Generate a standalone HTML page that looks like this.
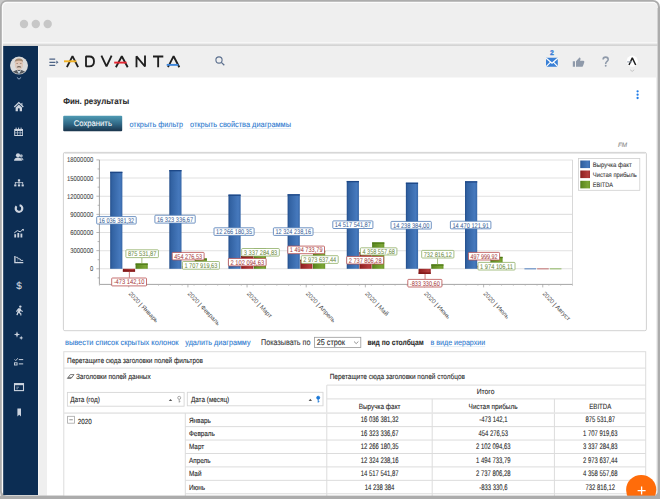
<!DOCTYPE html>
<html><head><meta charset="utf-8"><style>
*{margin:0;padding:0}
html,body{width:660px;height:499px;overflow:hidden;background:#fff}
svg{display:block;font-family:"Liberation Sans",sans-serif}
text{stroke:currentColor;text-rendering:geometricPrecision}
</style></head><body>
<svg width="660" height="499" viewBox="0 0 660 499">
<defs>
<linearGradient id="tbl" x1="0" y1="0" x2="0" y2="1"><stop offset="0" stop-color="#e2e2e2"/><stop offset="1" stop-color="#d0d0d0"/></linearGradient>
<linearGradient id="btn" x1="0" y1="0" x2="0" y2="1"><stop offset="0" stop-color="#4f9bb4"/><stop offset="0.55" stop-color="#2f6684"/><stop offset="1" stop-color="#1a344c"/></linearGradient>
<linearGradient id="gb" x1="0" y1="0" x2="1" y2="0"><stop offset="0" stop-color="#214c8a"/><stop offset="0.15" stop-color="#3262a2"/><stop offset="0.8" stop-color="#4679bd"/><stop offset="1" stop-color="#3767a8"/></linearGradient>
<linearGradient id="gr" x1="0" y1="0" x2="1" y2="0"><stop offset="0" stop-color="#7e1616"/><stop offset="0.15" stop-color="#952424"/><stop offset="0.8" stop-color="#b33c3c"/><stop offset="1" stop-color="#9c2e2e"/></linearGradient>
<linearGradient id="gg" x1="0" y1="0" x2="1" y2="0"><stop offset="0" stop-color="#4b7616"/><stop offset="0.15" stop-color="#5e8a20"/><stop offset="0.8" stop-color="#7ba536"/><stop offset="1" stop-color="#6a9528"/></linearGradient>
</defs><rect x="0" y="0" width="660" height="499" fill="#fff"/>
<rect x="0" y="0" width="10" height="10" fill="#c8c8c8"/>
<rect x="0" y="0" width="660" height="499" rx="7" fill="#acacac"/>
<rect x="1.8" y="1.8" width="656" height="494" rx="5" fill="#fbfbfb"/>
<rect x="3" y="3" width="654.5" height="492.5" rx="4.5" fill="#efefef"/>
<circle cx="24" cy="24" r="4.2" fill="#c7c7c7"/>
<circle cx="35.8" cy="24" r="4.2" fill="#c7c7c7"/>
<circle cx="47.7" cy="24" r="4.2" fill="#c7c7c7"/>
<rect x="3" y="42" width="654.5" height="1.5" fill="#f7f7f7"/>
<rect x="3" y="43.6" width="654.5" height="2.4" fill="url(#tbl)"/>
<rect x="3.2" y="46" width="34.8" height="449" fill="#0c2d53"/>
<rect x="38" y="46" width="1" height="449" fill="#f6f6f6"/>
<rect x="47" y="77.5" width="609" height="418" fill="#ffffff"/>
<g stroke="#4d6385" stroke-width="1.2" fill="none"><path d="M49.4 59.2H55.2M49.4 62.3H55.4M49.4 65.4H55.2"/></g><path d="M56.3 60.5L58.5 62.3L56.3 64.1Z" fill="#4d6385"/>
<g fill="none" stroke="#1f1f1f" stroke-width="1.85" stroke-linejoin="bevel"><path d="M66.9 67.2L72.5 56.2L78.1 67.2"/><path d="M86 56.5V66.3H89.3C92.9 66.3 94 63.7 94 61.4C94 59.1 92.9 56.5 89.3 56.5Z"/><path d="M101.4 55.6L106.5 66.4L111.6 55.6"/><path d="M115.9 67.2L121.8 56.2L127.7 67.2"/><path d="M136.5 67.2V56.3L145 66.5V55.6"/><path d="M153 56.5H163.3M158.15 56.5V67.2"/><path d="M168 67.2L173.6 56.2L179.3 67.2"/></g>
<line x1="64" y1="61.3" x2="76.3" y2="61.3" stroke="#f1b124" stroke-width="1.9"/>
<line x1="114.2" y1="62.6" x2="126.6" y2="62.6" stroke="#e52631" stroke-width="1.9"/>
<line x1="166.7" y1="64.9" x2="178.4" y2="64.9" stroke="#3b84d9" stroke-width="1.9"/>
<g fill="none" stroke="#5b6f8e" stroke-width="1.1"><circle cx="219" cy="60" r="3.1"/><path d="M221.3 62.4L224.3 65.3" stroke-width="1.3"/></g>
<rect x="546" y="57.8" width="11.8" height="9" rx="0.3" fill="#3a80d6"/>
<path d="M546.2 58.2L552 63.2L557.8 58.2M546.2 66.6L550.3 62.3M557.8 66.6L553.7 62.3" stroke="#fff" stroke-width="1.15" fill="none"/>
<text x="552.00" y="54.95" font-size="6.8" fill="#3a80d6" color="#3a80d6" stroke-width="0.35" text-anchor="middle" font-weight="bold">2</text>
<path fill="#8f9aaa" d="M572.8 61.2h2.2v5.5h-2.2z M576 61.3L578.6 58.6L579.3 57.4C580.2 57.3 580.8 58.1 580.5 59.3L580 60.8H583.3C584.2 60.8 584.5 61.6 584.2 62.4L583 65.9C582.7 66.5 582.3 66.7 581.7 66.7H576Z"/>
<path d="M603.1 59.6C603.1 57.9 604.2 57.1 605.6 57.1C607.1 57.1 608.2 58 608.2 59.4C608.2 61.3 605.7 61.5 605.7 63.6V64" stroke="#8f9aaa" stroke-width="1.55" fill="none"/><circle cx="605.7" cy="65.7" r="0.95" fill="#8f9aaa"/>
<circle cx="632.2" cy="61.2" r="5.6" fill="#ffffff"/>
<path d="M629 65L632.3 57.9L635.7 65" stroke="#1e1e1e" stroke-width="1.45" stroke-linejoin="bevel" fill="none"/>
<line x1="627.2" y1="61.9" x2="632.2" y2="61.9" stroke="#8a96a6" stroke-width="1.0"/>
<path d="M630.2 69.8L632.2 71.4L634.2 69.8" stroke="#b0b0b0" stroke-width="0.7" fill="none"/>
<circle cx="19" cy="65.6" r="9" fill="#c9c9c9"/>
<clipPath id="avc"><circle cx="19" cy="65.6" r="8.5"/></clipPath>
<g clip-path="url(#avc)"><rect x="10" y="56" width="18" height="19" fill="#dcdcdc"/><path d="M12 76L13.2 71.6L16.5 70L19 69.6L21.5 70L24.8 71.6L26 76Z" fill="#55595f"/><path d="M16.6 70L19 73.8L21.4 70L19 71.2Z" fill="#f4f4f4"/><path d="M18.6 71.2H19.4L19.5 74H18.5Z" fill="#8fb3d0"/><ellipse cx="18.9" cy="64.8" rx="4.1" ry="5.1" fill="#e3c5b3"/><ellipse cx="18.9" cy="66.2" rx="3.4" ry="3.2" fill="#d8d0ca" opacity="0.6"/><path d="M14.8 63C14.6 59.2 16.4 58.4 19 58.4C21.6 58.4 23.4 59.4 23.1 63L22.4 61.3C21 60.4 17 60.4 15.5 61.3Z" fill="#a58a72"/><path d="M16.6 66.9C17.6 66.1 20.4 66.1 21.3 66.9L20.8 67.6C20 67.2 17.9 67.2 17.1 67.6Z" fill="#4e3f35"/><rect x="16.4" y="63.4" width="1.6" height="0.6" fill="#8a7060"/><rect x="19.9" y="63.4" width="1.6" height="0.6" fill="#8a7060"/></g>
<path d="M16.9 77.4L19 79.2L21.1 77.4" stroke="#a9bbd2" stroke-width="0.9" fill="none"/>
<path d="M14.3 107L18.8 102.6L23.3 107" stroke="#cdd4df" stroke-width="1.25" fill="none"/><path d="M21.3 103.2L22.4 102.8V105.6L21.3 104.6Z" fill="#cdd4df"/>
<path fill="#cdd4df" d="M15.6 107.6L18.8 104.6L22 107.6V111.2H19.7V108.6Q18.8 107.8 17.9 108.6V111.2H15.6Z"/>
<g fill="#cdd4df"><path d="M14.2 129h8.8v7h-8.8z"/></g><g fill="#0c2d53"><rect x="15.2" y="131" width="2" height="1.6"/><rect x="17.8" y="131" width="2" height="1.6"/><rect x="20.4" y="131" width="1.8" height="1.6"/><rect x="15.2" y="133.2" width="2" height="1.8"/><rect x="17.8" y="133.2" width="2" height="1.8"/><rect x="20.4" y="133.2" width="1.8" height="1.8"/></g>
<g fill="#cdd4df"><rect x="15.6" y="127.6" width="1" height="1.8"/><rect x="18.1" y="127.6" width="1" height="1.8"/><rect x="20.6" y="127.6" width="1" height="1.8"/></g>
<g fill="#cdd4df"><circle cx="18" cy="155.3" r="2.1"/><path d="M14 160.8C14 158.3 16 157.6 18 157.6C20 157.6 22 158.3 22 160.8Z"/><circle cx="21.2" cy="155.8" r="1.6" opacity="0.8"/><path d="M20.6 157.4C22.4 157.5 23.5 158.4 23.5 160.3H22.3Z" opacity="0.8"/></g>
<g fill="#cdd4df"><rect x="17.9" y="179.3" width="2.2" height="2"/><rect x="18.6" y="181" width="0.8" height="1.6"/><rect x="14.9" y="182.3" width="8.2" height="0.8"/><rect x="14.9" y="182.3" width="0.8" height="2"/><rect x="18.6" y="182.3" width="0.8" height="2"/><rect x="22.3" y="182.3" width="0.8" height="2"/><rect x="14.2" y="184.4" width="2.2" height="2"/><rect x="17.9" y="184.4" width="2.2" height="2"/><rect x="21.6" y="184.4" width="2.2" height="2"/></g>
<circle cx="19" cy="208.5" r="3.3" fill="none" stroke="#cdd4df" stroke-width="2.2" stroke-dasharray="17 3.8" transform="rotate(-80 19 208.5)"/>
<g fill="#cdd4df"><rect x="14.3" y="234.2" width="1.8" height="3.3"/><rect x="17.4" y="233" width="1.8" height="4.5"/><rect x="20.5" y="233.6" width="1.8" height="3.9"/></g><path d="M14.2 233L17.3 230.6L20.2 231.8L23.2 229.4" stroke="#cdd4df" stroke-width="1" fill="none"/><path d="M21.6 229H23.8V231.2Z" fill="#cdd4df"/>
<path d="M14.9 256.1V262.6H23.3" stroke="#cdd4df" stroke-width="1.35" fill="none"/><path d="M15.8 257.3H17.6L18.4 258.9H20.1L20.9 260.4H23.1" stroke="#cdd4df" stroke-width="0.9" fill="none"/><path d="M17.6 257.3V261.8M20.1 258.9V261.8" stroke="#cdd4df" stroke-width="0.5" opacity="0.5"/>
<text x="19.00" y="288.50" font-size="10" fill="#cdd4df" color="#cdd4df" stroke-width="0.1" text-anchor="middle">$</text>
<g fill="#cdd4df"><circle cx="20.3" cy="306.6" r="1.2"/><path d="M18.2 308.3L20.6 308.2L21.4 310.3L23 311.1L22.6 311.9L20.6 311L19.9 312.2L21.4 313.6V315.4H20.3V314.2L18.6 312.8L17.6 315.3L16.3 315.1L17.6 311.6L18.5 310.1L17.6 310.9L16.6 311.9L16 311.3Z"/></g>
<g fill="#cdd4df"><path d="M17 331.3L17.8 333.7L20.2 334.5L17.8 335.3L17 337.7L16.2 335.3L13.8 334.5L16.2 333.7Z"/><path d="M21.2 335.8L21.8 337.3L23.3 337.9L21.8 338.5L21.2 340L20.6 338.5L19.1 337.9L20.6 337.3Z"/></g>
<g stroke="#cdd4df" fill="none"><path d="M14.6 359.4L15.8 360.6L17.8 358.2" stroke-width="0.9"/><rect x="14.5" y="362.8" width="2.6" height="2.2" stroke-width="0.9"/><path d="M18.8 359.6H23.2M18.8 363.9H23.2" stroke-width="1"/></g>
<rect x="14.5" y="383.6" width="9" height="7" fill="none" stroke="#cdd4df" stroke-width="1.1"/><rect x="14.5" y="383.6" width="9" height="1.6" fill="#cdd4df"/><path d="M16.3 387.2H19M16.3 388.8H18" stroke="#cdd4df" stroke-width="0.6"/>
<path d="M17.4 408.6H21V416.6L19.2 414.8L17.4 416.6Z" fill="#cdd4df"/>
<text x="63.20" y="104.40" font-size="8.6" fill="#2b2b2b" color="#2b2b2b" stroke-width="0.1" font-weight="bold" textLength="66.00" lengthAdjust="spacingAndGlyphs">Фин. результаты</text>
<rect x="63.2" y="115.8" width="59" height="15.4" rx="1" fill="url(#btn)"/>
<text x="92.80" y="126.10" font-size="8.2" fill="#f4f7fa" color="#f4f7fa" stroke-width="0.1" text-anchor="middle" textLength="38.20" lengthAdjust="spacingAndGlyphs">Сохранить</text>
<text x="129.50" y="126.90" font-size="8" fill="#2f7bd0" color="#2f7bd0" stroke-width="0.1" textLength="53.50" lengthAdjust="spacingAndGlyphs">открыть фильтр</text>
<line x1="129.5" y1="128.5" x2="183" y2="128.5" stroke="#cfe0f3" stroke-width="0.6"/>
<text x="190.00" y="126.90" font-size="8" fill="#2f7bd0" color="#2f7bd0" stroke-width="0.1" textLength="101.00" lengthAdjust="spacingAndGlyphs">открыть свойства диаграммы</text>
<line x1="190" y1="128.5" x2="291" y2="128.5" stroke="#cfe0f3" stroke-width="0.6"/>
<circle cx="637.6" cy="91.3" r="1.15" fill="#1f7ce8"/>
<circle cx="637.6" cy="94.7" r="1.15" fill="#1f7ce8"/>
<circle cx="637.6" cy="98" r="1.15" fill="#1f7ce8"/>
<text x="617.90" y="146.80" font-size="6.3" fill="#8a8a8a" color="#8a8a8a" stroke-width="0.1" font-style="italic" textLength="9.20" lengthAdjust="spacingAndGlyphs">FM</text>
<rect x="63.4" y="152.4" width="583" height="178.3" rx="1.5" fill="#fff" stroke="#d2d2d2" stroke-width="1"/>
<line x1="64.5" y1="153.2" x2="645.4" y2="153.2" stroke="#dcdcdc" stroke-width="1"/>
<line x1="99.5" y1="268.8" x2="572.5" y2="268.8" stroke="#e1e1e1" stroke-width="1.05"/>
<line x1="99.5" y1="250.65" x2="572.5" y2="250.65" stroke="#e1e1e1" stroke-width="1.05"/>
<line x1="99.5" y1="232.5" x2="572.5" y2="232.5" stroke="#e1e1e1" stroke-width="1.05"/>
<line x1="99.5" y1="214.35000000000002" x2="572.5" y2="214.35000000000002" stroke="#e1e1e1" stroke-width="1.05"/>
<line x1="99.5" y1="196.20000000000002" x2="572.5" y2="196.20000000000002" stroke="#e1e1e1" stroke-width="1.05"/>
<line x1="99.5" y1="178.05" x2="572.5" y2="178.05" stroke="#e1e1e1" stroke-width="1.05"/>
<line x1="99.5" y1="159.90000000000003" x2="572.5" y2="159.90000000000003" stroke="#e1e1e1" stroke-width="1.05"/>
<line x1="572.5" y1="159.9" x2="572.5" y2="284.4" stroke="#d8d8d8" stroke-width="1"/>
<line x1="99.4" y1="159.9" x2="99.4" y2="284.4" stroke="#9a9a9a" stroke-width="0.9"/>
<line x1="99.4" y1="284.4" x2="572.5" y2="284.4" stroke="#9a9a9a" stroke-width="0.9"/>
<line x1="97.60000000000001" y1="277.875" x2="99.4" y2="277.875" stroke="#9a9a9a" stroke-width="0.7"/>
<line x1="96.4" y1="268.8" x2="99.4" y2="268.8" stroke="#9a9a9a" stroke-width="0.7"/>
<line x1="97.60000000000001" y1="259.725" x2="99.4" y2="259.725" stroke="#9a9a9a" stroke-width="0.7"/>
<line x1="96.4" y1="250.65" x2="99.4" y2="250.65" stroke="#9a9a9a" stroke-width="0.7"/>
<line x1="97.60000000000001" y1="241.57500000000002" x2="99.4" y2="241.57500000000002" stroke="#9a9a9a" stroke-width="0.7"/>
<line x1="96.4" y1="232.5" x2="99.4" y2="232.5" stroke="#9a9a9a" stroke-width="0.7"/>
<line x1="97.60000000000001" y1="223.425" x2="99.4" y2="223.425" stroke="#9a9a9a" stroke-width="0.7"/>
<line x1="96.4" y1="214.35000000000002" x2="99.4" y2="214.35000000000002" stroke="#9a9a9a" stroke-width="0.7"/>
<line x1="97.60000000000001" y1="205.27500000000003" x2="99.4" y2="205.27500000000003" stroke="#9a9a9a" stroke-width="0.7"/>
<line x1="96.4" y1="196.20000000000002" x2="99.4" y2="196.20000000000002" stroke="#9a9a9a" stroke-width="0.7"/>
<line x1="97.60000000000001" y1="187.125" x2="99.4" y2="187.125" stroke="#9a9a9a" stroke-width="0.7"/>
<line x1="96.4" y1="178.05" x2="99.4" y2="178.05" stroke="#9a9a9a" stroke-width="0.7"/>
<line x1="97.60000000000001" y1="168.97500000000002" x2="99.4" y2="168.97500000000002" stroke="#9a9a9a" stroke-width="0.7"/>
<line x1="96.4" y1="159.90000000000003" x2="99.4" y2="159.90000000000003" stroke="#9a9a9a" stroke-width="0.7"/>
<text x="93.20" y="271.30" font-size="7" fill="#4a4a4a" color="#4a4a4a" stroke-width="0.1" text-anchor="end" textLength="3.27" lengthAdjust="spacingAndGlyphs">0</text>
<text x="93.20" y="253.15" font-size="7" fill="#4a4a4a" color="#4a4a4a" stroke-width="0.1" text-anchor="end" textLength="22.89" lengthAdjust="spacingAndGlyphs">3000000</text>
<text x="93.20" y="235.00" font-size="7" fill="#4a4a4a" color="#4a4a4a" stroke-width="0.1" text-anchor="end" textLength="22.89" lengthAdjust="spacingAndGlyphs">6000000</text>
<text x="93.20" y="216.85" font-size="7" fill="#4a4a4a" color="#4a4a4a" stroke-width="0.1" text-anchor="end" textLength="22.89" lengthAdjust="spacingAndGlyphs">9000000</text>
<text x="93.20" y="198.70" font-size="7" fill="#4a4a4a" color="#4a4a4a" stroke-width="0.1" text-anchor="end" textLength="26.16" lengthAdjust="spacingAndGlyphs">12000000</text>
<text x="93.20" y="180.55" font-size="7" fill="#4a4a4a" color="#4a4a4a" stroke-width="0.1" text-anchor="end" textLength="26.16" lengthAdjust="spacingAndGlyphs">15000000</text>
<text x="93.20" y="162.40" font-size="7" fill="#4a4a4a" color="#4a4a4a" stroke-width="0.1" text-anchor="end" textLength="26.16" lengthAdjust="spacingAndGlyphs">18000000</text>
<line x1="128.77" y1="284.4" x2="128.77" y2="287.4" stroke="#9a9a9a" stroke-width="0.7"/>
<line x1="187.91000000000003" y1="284.4" x2="187.91000000000003" y2="287.4" stroke="#9a9a9a" stroke-width="0.7"/>
<line x1="247.05" y1="284.4" x2="247.05" y2="287.4" stroke="#9a9a9a" stroke-width="0.7"/>
<line x1="306.19" y1="284.4" x2="306.19" y2="287.4" stroke="#9a9a9a" stroke-width="0.7"/>
<line x1="365.33" y1="284.4" x2="365.33" y2="287.4" stroke="#9a9a9a" stroke-width="0.7"/>
<line x1="424.46999999999997" y1="284.4" x2="424.46999999999997" y2="287.4" stroke="#9a9a9a" stroke-width="0.7"/>
<line x1="483.61" y1="284.4" x2="483.61" y2="287.4" stroke="#9a9a9a" stroke-width="0.7"/>
<line x1="542.75" y1="284.4" x2="542.75" y2="287.4" stroke="#9a9a9a" stroke-width="0.7"/>
<line x1="99.4" y1="284.4" x2="99.4" y2="285.9" stroke="#b5b5b5" stroke-width="0.6"/>
<line x1="111.22800000000001" y1="284.4" x2="111.22800000000001" y2="285.9" stroke="#b5b5b5" stroke-width="0.6"/>
<line x1="123.05600000000001" y1="284.4" x2="123.05600000000001" y2="285.9" stroke="#b5b5b5" stroke-width="0.6"/>
<line x1="134.88400000000001" y1="284.4" x2="134.88400000000001" y2="285.9" stroke="#b5b5b5" stroke-width="0.6"/>
<line x1="146.712" y1="284.4" x2="146.712" y2="285.9" stroke="#b5b5b5" stroke-width="0.6"/>
<line x1="158.54000000000002" y1="284.4" x2="158.54000000000002" y2="285.9" stroke="#b5b5b5" stroke-width="0.6"/>
<line x1="170.368" y1="284.4" x2="170.368" y2="285.9" stroke="#b5b5b5" stroke-width="0.6"/>
<line x1="182.19600000000003" y1="284.4" x2="182.19600000000003" y2="285.9" stroke="#b5b5b5" stroke-width="0.6"/>
<line x1="194.024" y1="284.4" x2="194.024" y2="285.9" stroke="#b5b5b5" stroke-width="0.6"/>
<line x1="205.852" y1="284.4" x2="205.852" y2="285.9" stroke="#b5b5b5" stroke-width="0.6"/>
<line x1="217.68" y1="284.4" x2="217.68" y2="285.9" stroke="#b5b5b5" stroke-width="0.6"/>
<line x1="229.508" y1="284.4" x2="229.508" y2="285.9" stroke="#b5b5b5" stroke-width="0.6"/>
<line x1="241.336" y1="284.4" x2="241.336" y2="285.9" stroke="#b5b5b5" stroke-width="0.6"/>
<line x1="253.16400000000002" y1="284.4" x2="253.16400000000002" y2="285.9" stroke="#b5b5b5" stroke-width="0.6"/>
<line x1="264.992" y1="284.4" x2="264.992" y2="285.9" stroke="#b5b5b5" stroke-width="0.6"/>
<line x1="276.82000000000005" y1="284.4" x2="276.82000000000005" y2="285.9" stroke="#b5b5b5" stroke-width="0.6"/>
<line x1="288.648" y1="284.4" x2="288.648" y2="285.9" stroke="#b5b5b5" stroke-width="0.6"/>
<line x1="300.476" y1="284.4" x2="300.476" y2="285.9" stroke="#b5b5b5" stroke-width="0.6"/>
<line x1="312.304" y1="284.4" x2="312.304" y2="285.9" stroke="#b5b5b5" stroke-width="0.6"/>
<line x1="324.13200000000006" y1="284.4" x2="324.13200000000006" y2="285.9" stroke="#b5b5b5" stroke-width="0.6"/>
<line x1="335.96000000000004" y1="284.4" x2="335.96000000000004" y2="285.9" stroke="#b5b5b5" stroke-width="0.6"/>
<line x1="347.788" y1="284.4" x2="347.788" y2="285.9" stroke="#b5b5b5" stroke-width="0.6"/>
<line x1="359.616" y1="284.4" x2="359.616" y2="285.9" stroke="#b5b5b5" stroke-width="0.6"/>
<line x1="371.44399999999996" y1="284.4" x2="371.44399999999996" y2="285.9" stroke="#b5b5b5" stroke-width="0.6"/>
<line x1="383.27200000000005" y1="284.4" x2="383.27200000000005" y2="285.9" stroke="#b5b5b5" stroke-width="0.6"/>
<line x1="395.1" y1="284.4" x2="395.1" y2="285.9" stroke="#b5b5b5" stroke-width="0.6"/>
<line x1="406.928" y1="284.4" x2="406.928" y2="285.9" stroke="#b5b5b5" stroke-width="0.6"/>
<line x1="418.756" y1="284.4" x2="418.756" y2="285.9" stroke="#b5b5b5" stroke-width="0.6"/>
<line x1="430.58400000000006" y1="284.4" x2="430.58400000000006" y2="285.9" stroke="#b5b5b5" stroke-width="0.6"/>
<line x1="442.41200000000003" y1="284.4" x2="442.41200000000003" y2="285.9" stroke="#b5b5b5" stroke-width="0.6"/>
<line x1="454.24" y1="284.4" x2="454.24" y2="285.9" stroke="#b5b5b5" stroke-width="0.6"/>
<line x1="466.068" y1="284.4" x2="466.068" y2="285.9" stroke="#b5b5b5" stroke-width="0.6"/>
<line x1="477.89599999999996" y1="284.4" x2="477.89599999999996" y2="285.9" stroke="#b5b5b5" stroke-width="0.6"/>
<line x1="489.72400000000005" y1="284.4" x2="489.72400000000005" y2="285.9" stroke="#b5b5b5" stroke-width="0.6"/>
<line x1="501.552" y1="284.4" x2="501.552" y2="285.9" stroke="#b5b5b5" stroke-width="0.6"/>
<line x1="513.38" y1="284.4" x2="513.38" y2="285.9" stroke="#b5b5b5" stroke-width="0.6"/>
<line x1="525.208" y1="284.4" x2="525.208" y2="285.9" stroke="#b5b5b5" stroke-width="0.6"/>
<line x1="537.036" y1="284.4" x2="537.036" y2="285.9" stroke="#b5b5b5" stroke-width="0.6"/>
<line x1="548.864" y1="284.4" x2="548.864" y2="285.9" stroke="#b5b5b5" stroke-width="0.6"/>
<line x1="560.692" y1="284.4" x2="560.692" y2="285.9" stroke="#b5b5b5" stroke-width="0.6"/>
<line x1="572.52" y1="284.4" x2="572.52" y2="285.9" stroke="#b5b5b5" stroke-width="0.6"/>
<rect x="110.17" y="171.78" width="12.2" height="97.02" fill="url(#gb)"/>
<rect x="110.17" y="171.78" width="12.2" height="1.3" fill="#1d4786"/>
<rect x="122.87" y="268.80" width="12.2" height="2.86" fill="url(#gr)"/>
<rect x="122.87" y="270.36" width="12.2" height="1.3" fill="#7d1414"/>
<rect x="135.57" y="263.50" width="12.2" height="5.30" fill="url(#gg)"/>
<rect x="135.57" y="263.50" width="12.2" height="1.3" fill="#4e7a16"/>
<rect x="169.31" y="170.04" width="12.2" height="98.76" fill="url(#gb)"/>
<rect x="169.31" y="170.04" width="12.2" height="1.3" fill="#1d4786"/>
<rect x="182.01" y="266.05" width="12.2" height="2.75" fill="url(#gr)"/>
<rect x="182.01" y="266.05" width="12.2" height="1.3" fill="#7d1414"/>
<rect x="194.71" y="258.47" width="12.2" height="10.33" fill="url(#gg)"/>
<rect x="194.71" y="258.47" width="12.2" height="1.3" fill="#4e7a16"/>
<rect x="228.45" y="194.59" width="12.2" height="74.21" fill="url(#gb)"/>
<rect x="228.45" y="194.59" width="12.2" height="1.3" fill="#1d4786"/>
<rect x="241.15" y="256.08" width="12.2" height="12.72" fill="url(#gr)"/>
<rect x="241.15" y="256.08" width="12.2" height="1.3" fill="#7d1414"/>
<rect x="253.85" y="248.61" width="12.2" height="20.19" fill="url(#gg)"/>
<rect x="253.85" y="248.61" width="12.2" height="1.3" fill="#4e7a16"/>
<rect x="287.59" y="194.24" width="12.2" height="74.56" fill="url(#gb)"/>
<rect x="287.59" y="194.24" width="12.2" height="1.3" fill="#1d4786"/>
<rect x="300.29" y="259.76" width="12.2" height="9.04" fill="url(#gr)"/>
<rect x="300.29" y="259.76" width="12.2" height="1.3" fill="#7d1414"/>
<rect x="312.99" y="250.81" width="12.2" height="17.99" fill="url(#gg)"/>
<rect x="312.99" y="250.81" width="12.2" height="1.3" fill="#4e7a16"/>
<rect x="346.73" y="180.97" width="12.2" height="87.83" fill="url(#gb)"/>
<rect x="346.73" y="180.97" width="12.2" height="1.3" fill="#1d4786"/>
<rect x="359.43" y="252.24" width="12.2" height="16.56" fill="url(#gr)"/>
<rect x="359.43" y="252.24" width="12.2" height="1.3" fill="#7d1414"/>
<rect x="372.13" y="242.43" width="12.2" height="26.37" fill="url(#gg)"/>
<rect x="372.13" y="242.43" width="12.2" height="1.3" fill="#4e7a16"/>
<rect x="405.87" y="182.66" width="12.2" height="86.14" fill="url(#gb)"/>
<rect x="405.87" y="182.66" width="12.2" height="1.3" fill="#1d4786"/>
<rect x="418.57" y="268.80" width="12.2" height="5.04" fill="url(#gr)"/>
<rect x="418.57" y="272.54" width="12.2" height="1.3" fill="#7d1414"/>
<rect x="431.27" y="264.37" width="12.2" height="4.43" fill="url(#gg)"/>
<rect x="431.27" y="264.37" width="12.2" height="1.3" fill="#4e7a16"/>
<rect x="465.01" y="181.26" width="12.2" height="87.54" fill="url(#gb)"/>
<rect x="465.01" y="181.26" width="12.2" height="1.3" fill="#1d4786"/>
<rect x="477.71" y="265.79" width="12.2" height="3.01" fill="url(#gr)"/>
<rect x="477.71" y="265.79" width="12.2" height="1.3" fill="#7d1414"/>
<rect x="490.41" y="256.86" width="12.2" height="11.94" fill="url(#gg)"/>
<rect x="490.41" y="256.86" width="12.2" height="1.3" fill="#4e7a16"/>
<rect x="524.45" y="268.2" width="11.6" height="1.2" fill="#6d93c8"/>
<rect x="537.15" y="268.2" width="11.6" height="1.2" fill="#c98585"/>
<rect x="549.85" y="268.2" width="11.6" height="1.2" fill="#9fc079"/>
<line x1="141.87" y1="263.50303218650004" x2="141.87" y2="258.0" stroke="#8fb060" stroke-width="0.8"/>
<line x1="129.37" y1="271.7" x2="129.37" y2="277.6" stroke="#c05a5a" stroke-width="0.8"/>
<line x1="425.07" y1="273.90000000000003" x2="425.07" y2="279.0" stroke="#c05a5a" stroke-width="0.8"/>
<line x1="437.57" y1="264.366462474" x2="437.57" y2="258.4" stroke="#8fb060" stroke-width="0.8"/>
<rect x="96.70" y="216.60" width="39.50" height="7.40" rx="0.8" fill="#fff" stroke="#4c78b4" stroke-width="0.8"/>
<text x="116.45" y="222.80" font-size="6.9" fill="#3a5f98" color="#3a5f98" stroke-width="0.04" text-anchor="middle" textLength="35.50" lengthAdjust="spacingAndGlyphs">16 036 381,32</text>
<rect x="125.90" y="249.80" width="32.50" height="7.80" rx="0.8" fill="#fff" stroke="#8fae66" stroke-width="0.8"/>
<text x="142.15" y="256.20" font-size="6.9" fill="#6c8a40" color="#6c8a40" stroke-width="0.04" text-anchor="middle" textLength="28.50" lengthAdjust="spacingAndGlyphs">875 531,87</text>
<rect x="111.70" y="278.00" width="34.80" height="7.90" rx="0.8" fill="#fff" stroke="#b84c4c" stroke-width="0.8"/>
<text x="129.10" y="284.45" font-size="6.9" fill="#a83c3c" color="#a83c3c" stroke-width="0.04" text-anchor="middle" textLength="30.80" lengthAdjust="spacingAndGlyphs">-473 142,10</text>
<rect x="154.90" y="215.20" width="40.30" height="7.90" rx="0.8" fill="#fff" stroke="#4c78b4" stroke-width="0.8"/>
<text x="175.05" y="221.65" font-size="6.9" fill="#3a5f98" color="#3a5f98" stroke-width="0.04" text-anchor="middle" textLength="36.30" lengthAdjust="spacingAndGlyphs">16 323 336,67</text>
<rect x="172.20" y="252.40" width="31.90" height="7.50" rx="0.8" fill="#fff" stroke="#b84c4c" stroke-width="0.8"/>
<text x="188.15" y="258.65" font-size="6.9" fill="#a83c3c" color="#a83c3c" stroke-width="0.04" text-anchor="middle" textLength="27.90" lengthAdjust="spacingAndGlyphs">454 276,53</text>
<rect x="182.40" y="261.50" width="37.00" height="7.70" rx="0.8" fill="#fff" stroke="#8fae66" stroke-width="0.8"/>
<text x="200.90" y="267.85" font-size="6.9" fill="#6c8a40" color="#6c8a40" stroke-width="0.04" text-anchor="middle" textLength="33.00" lengthAdjust="spacingAndGlyphs">1 707 919,63</text>
<rect x="214.00" y="227.80" width="40.10" height="7.60" rx="0.8" fill="#fff" stroke="#4c78b4" stroke-width="0.8"/>
<text x="234.05" y="234.10" font-size="6.9" fill="#3a5f98" color="#3a5f98" stroke-width="0.04" text-anchor="middle" textLength="36.10" lengthAdjust="spacingAndGlyphs">12 266 180,35</text>
<rect x="241.70" y="248.50" width="37.60" height="7.60" rx="0.8" fill="#fff" stroke="#8fae66" stroke-width="0.8"/>
<text x="260.50" y="254.80" font-size="6.9" fill="#6c8a40" color="#6c8a40" stroke-width="0.04" text-anchor="middle" textLength="33.60" lengthAdjust="spacingAndGlyphs">3 337 284,83</text>
<rect x="228.40" y="258.40" width="37.70" height="7.50" rx="0.8" fill="#fff" stroke="#b84c4c" stroke-width="0.8"/>
<text x="247.25" y="264.65" font-size="6.9" fill="#a83c3c" color="#a83c3c" stroke-width="0.04" text-anchor="middle" textLength="33.70" lengthAdjust="spacingAndGlyphs">2 102 094,63</text>
<rect x="273.40" y="227.80" width="39.60" height="7.60" rx="0.8" fill="#fff" stroke="#4c78b4" stroke-width="0.8"/>
<text x="293.20" y="234.10" font-size="6.9" fill="#3a5f98" color="#3a5f98" stroke-width="0.04" text-anchor="middle" textLength="35.60" lengthAdjust="spacingAndGlyphs">12 324 238,16</text>
<rect x="287.80" y="246.10" width="36.70" height="7.60" rx="0.8" fill="#fff" stroke="#b84c4c" stroke-width="0.8"/>
<text x="306.15" y="252.40" font-size="6.9" fill="#a83c3c" color="#a83c3c" stroke-width="0.04" text-anchor="middle" textLength="32.70" lengthAdjust="spacingAndGlyphs">1 494 733,79</text>
<rect x="301.30" y="255.70" width="36.90" height="7.70" rx="0.8" fill="#fff" stroke="#8fae66" stroke-width="0.8"/>
<text x="319.75" y="262.05" font-size="6.9" fill="#6c8a40" color="#6c8a40" stroke-width="0.04" text-anchor="middle" textLength="32.90" lengthAdjust="spacingAndGlyphs">2 973 637,44</text>
<rect x="332.80" y="220.90" width="40.10" height="7.60" rx="0.8" fill="#fff" stroke="#4c78b4" stroke-width="0.8"/>
<text x="352.85" y="227.20" font-size="6.9" fill="#3a5f98" color="#3a5f98" stroke-width="0.04" text-anchor="middle" textLength="36.10" lengthAdjust="spacingAndGlyphs">14 517 541,87</text>
<rect x="360.40" y="247.80" width="36.50" height="7.20" rx="0.8" fill="#fff" stroke="#8fae66" stroke-width="0.8"/>
<text x="378.65" y="253.90" font-size="6.9" fill="#6c8a40" color="#6c8a40" stroke-width="0.04" text-anchor="middle" textLength="32.50" lengthAdjust="spacingAndGlyphs">4 358 557,68</text>
<rect x="346.70" y="256.40" width="36.90" height="7.60" rx="0.8" fill="#fff" stroke="#b84c4c" stroke-width="0.8"/>
<text x="365.15" y="262.70" font-size="6.9" fill="#a83c3c" color="#a83c3c" stroke-width="0.04" text-anchor="middle" textLength="32.90" lengthAdjust="spacingAndGlyphs">2 737 806,28</text>
<rect x="391.00" y="221.40" width="40.30" height="7.60" rx="0.8" fill="#fff" stroke="#4c78b4" stroke-width="0.8"/>
<text x="411.15" y="227.70" font-size="6.9" fill="#3a5f98" color="#3a5f98" stroke-width="0.04" text-anchor="middle" textLength="36.30" lengthAdjust="spacingAndGlyphs">14 238 384,00</text>
<rect x="421.70" y="250.40" width="32.20" height="7.60" rx="0.8" fill="#fff" stroke="#8fae66" stroke-width="0.8"/>
<text x="437.80" y="256.70" font-size="6.9" fill="#6c8a40" color="#6c8a40" stroke-width="0.04" text-anchor="middle" textLength="28.20" lengthAdjust="spacingAndGlyphs">732 816,12</text>
<rect x="407.80" y="279.40" width="34.10" height="7.60" rx="0.8" fill="#fff" stroke="#b84c4c" stroke-width="0.8"/>
<text x="424.85" y="285.70" font-size="6.9" fill="#a83c3c" color="#a83c3c" stroke-width="0.04" text-anchor="middle" textLength="30.10" lengthAdjust="spacingAndGlyphs">-833 330,60</text>
<rect x="450.40" y="221.20" width="40.50" height="7.60" rx="0.8" fill="#fff" stroke="#4c78b4" stroke-width="0.8"/>
<text x="470.65" y="227.50" font-size="6.9" fill="#3a5f98" color="#3a5f98" stroke-width="0.04" text-anchor="middle" textLength="36.50" lengthAdjust="spacingAndGlyphs">14 470 121,91</text>
<rect x="468.40" y="252.40" width="31.20" height="7.60" rx="0.8" fill="#fff" stroke="#b84c4c" stroke-width="0.8"/>
<text x="484.00" y="258.70" font-size="6.9" fill="#a83c3c" color="#a83c3c" stroke-width="0.04" text-anchor="middle" textLength="27.20" lengthAdjust="spacingAndGlyphs">497 999,92</text>
<rect x="478.00" y="262.40" width="37.00" height="7.60" rx="0.8" fill="#fff" stroke="#8fae66" stroke-width="0.8"/>
<text x="496.50" y="268.70" font-size="6.9" fill="#6c8a40" color="#6c8a40" stroke-width="0.04" text-anchor="middle" textLength="33.00" lengthAdjust="spacingAndGlyphs">1 974 106,11</text>
<g transform="translate(131.37,290.9) rotate(46.5)">
<text x="0.00" y="4.40" font-size="6.2" fill="#4a4a4a" color="#4a4a4a" stroke-width="0">2020 | Январь</text>
</g>
<g transform="translate(190.51,290.9) rotate(46.5)">
<text x="0.00" y="4.40" font-size="6.2" fill="#4a4a4a" color="#4a4a4a" stroke-width="0">2020 | Февраль</text>
</g>
<g transform="translate(249.65,290.9) rotate(46.5)">
<text x="0.00" y="4.40" font-size="6.2" fill="#4a4a4a" color="#4a4a4a" stroke-width="0">2020 | Март</text>
</g>
<g transform="translate(308.79,290.9) rotate(46.5)">
<text x="0.00" y="4.40" font-size="6.2" fill="#4a4a4a" color="#4a4a4a" stroke-width="0">2020 | Апрель</text>
</g>
<g transform="translate(367.93,290.9) rotate(46.5)">
<text x="0.00" y="4.40" font-size="6.2" fill="#4a4a4a" color="#4a4a4a" stroke-width="0">2020 | Май</text>
</g>
<g transform="translate(427.07,290.9) rotate(46.5)">
<text x="0.00" y="4.40" font-size="6.2" fill="#4a4a4a" color="#4a4a4a" stroke-width="0">2020 | Июнь</text>
</g>
<g transform="translate(486.21,290.9) rotate(46.5)">
<text x="0.00" y="4.40" font-size="6.2" fill="#4a4a4a" color="#4a4a4a" stroke-width="0">2020 | Июль</text>
</g>
<g transform="translate(545.35,290.9) rotate(46.5)">
<text x="0.00" y="4.40" font-size="6.2" fill="#4a4a4a" color="#4a4a4a" stroke-width="0">2020 | Август</text>
</g>
<rect x="578.4" y="158.5" width="61.4" height="31.8" fill="#fff" stroke="#cfcfcf" stroke-width="0.8"/>
<rect x="580.3" y="160.5" width="9.7" height="7.6" fill="url(#gb)"/>
<text x="592.80" y="166.50" font-size="6.6" fill="#3a3a3a" color="#3a3a3a" stroke-width="0.1" textLength="38.80" lengthAdjust="spacingAndGlyphs">Выручка факт</text>
<rect x="580.3" y="170.5" width="9.7" height="7.6" fill="url(#gr)"/>
<text x="592.80" y="176.50" font-size="6.6" fill="#3a3a3a" color="#3a3a3a" stroke-width="0.1" textLength="44.10" lengthAdjust="spacingAndGlyphs">Чистая прибыль</text>
<rect x="580.3" y="180.8" width="9.7" height="7.6" fill="url(#gg)"/>
<text x="592.80" y="186.80" font-size="6.6" fill="#3a3a3a" color="#3a3a3a" stroke-width="0.1" textLength="20.20" lengthAdjust="spacingAndGlyphs">EBITDA</text>
<text x="65.00" y="344.90" font-size="8" fill="#2f7bd0" color="#2f7bd0" stroke-width="0.1" textLength="113.60" lengthAdjust="spacingAndGlyphs">вывести список скрытых колонок</text>
<text x="185.30" y="344.90" font-size="8" fill="#2f7bd0" color="#2f7bd0" stroke-width="0.1" textLength="65.20" lengthAdjust="spacingAndGlyphs">удалить диаграмму</text>
<text x="261.00" y="345.40" font-size="8.2" fill="#3a3a3a" color="#3a3a3a" stroke-width="0.1" textLength="49.50" lengthAdjust="spacingAndGlyphs">Показывать по</text>
<rect x="314.5" y="337.3" width="46.3" height="10.2" fill="#fff" stroke="#9a9a9a" stroke-width="0.8"/>
<text x="316.80" y="345.30" font-size="8.2" fill="#2a2a2a" color="#2a2a2a" stroke-width="0.1" textLength="28.20" lengthAdjust="spacingAndGlyphs">25 строк</text>
<path d="M354 341.5L356.2 343.6L358.4 341.5" stroke="#666" stroke-width="0.7" fill="none"/>
<text x="367.40" y="345.00" font-size="8" fill="#2a2a2a" color="#2a2a2a" stroke-width="0.1" font-weight="bold" textLength="56.20" lengthAdjust="spacingAndGlyphs">вид по столбцам</text>
<text x="430.60" y="345.00" font-size="8" fill="#2f7bd0" color="#2f7bd0" stroke-width="0.1" textLength="54.60" lengthAdjust="spacingAndGlyphs">в виде иерархии</text>
<line x1="430.6" y1="346.6" x2="485.2" y2="346.6" stroke="#cfe0f3" stroke-width="0.6"/>
<rect x="63.8" y="351.7" width="581.9" height="150" fill="#fff" stroke="#dcdcdc" stroke-width="1"/>
<line x1="63.8" y1="368.1" x2="645.7" y2="368.1" stroke="#dcdcdc" stroke-width="1"/>
<text x="67.00" y="363.00" font-size="7.6" fill="#262626" color="#262626" stroke-width="0.1" textLength="136.00" lengthAdjust="spacingAndGlyphs">Перетащите сюда заголовки полей фильтров</text>
<path d="M67.4 378.4L70.3 374.6H74L71.1 378.4Z" fill="#fff" stroke="#555" stroke-width="0.8"/><path d="M68.2 377.4H71.8" stroke="#555" stroke-width="0.7"/>
<text x="75.90" y="379.40" font-size="7.6" fill="#262626" color="#262626" stroke-width="0.1" textLength="74.90" lengthAdjust="spacingAndGlyphs">Заголовки полей данных</text>
<text x="329.70" y="379.20" font-size="7.6" fill="#262626" color="#262626" stroke-width="0.1" textLength="135.30" lengthAdjust="spacingAndGlyphs">Перетащите сюда заголовки полей столбцов</text>
<rect x="67.4" y="392.4" width="116.7" height="13.8" fill="#fff" stroke="#d6d6d6" stroke-width="0.9"/>
<text x="70.20" y="401.90" font-size="7.6" fill="#262626" color="#262626" stroke-width="0.1" textLength="29.70" lengthAdjust="spacingAndGlyphs">Дата (год)</text>
<path d="M168.8 401.1L170.5 398.9L172.2 401.1Z" fill="#555"/>
<g stroke="#888" fill="none" stroke-width="0.7"><circle cx="179.2" cy="397.8" r="1.5"/><path d="M179.2 399.3V402.6M179.2 401.4H180.4"/></g>
<rect x="187.3" y="392.3" width="135.7" height="13.5" fill="#fff" stroke="#d6d6d6" stroke-width="0.9"/>
<text x="190.90" y="401.90" font-size="7.6" fill="#262626" color="#262626" stroke-width="0.1" textLength="38.30" lengthAdjust="spacingAndGlyphs">Дата (месяц)</text>
<path d="M308.6 401.0L310.3 398.8L312.0 401.0Z" fill="#555"/>
<g stroke="#1c78d6" fill="none" stroke-width="0.9"><circle cx="318.2" cy="397.7" r="1.5" fill="#1c78d6"/><path d="M318.2 399.2V402.6M318.2 401.4H319.4"/></g>
<line x1="326.8" y1="385.1" x2="645.7" y2="385.1" stroke="#dcdcdc" stroke-width="1"/>
<line x1="326.8" y1="385.1" x2="326.8" y2="499" stroke="#dcdcdc" stroke-width="1"/>
<line x1="326.8" y1="398.9" x2="645.7" y2="398.9" stroke="#dcdcdc" stroke-width="1"/>
<line x1="432.2" y1="398.9" x2="432.2" y2="499" stroke="#dcdcdc" stroke-width="1"/>
<line x1="554.4" y1="398.9" x2="554.4" y2="499" stroke="#dcdcdc" stroke-width="1"/>
<text x="485.60" y="394.20" font-size="7.6" fill="#262626" color="#262626" stroke-width="0.1" text-anchor="middle" textLength="17.70" lengthAdjust="spacingAndGlyphs">Итого</text>
<text x="379.60" y="408.70" font-size="7.6" fill="#262626" color="#262626" stroke-width="0.1" text-anchor="middle" textLength="41.70" lengthAdjust="spacingAndGlyphs">Выручка факт</text>
<text x="493.10" y="408.50" font-size="7.6" fill="#262626" color="#262626" stroke-width="0.1" text-anchor="middle" textLength="49.00" lengthAdjust="spacingAndGlyphs">Чистая прибыль</text>
<text x="600.30" y="408.50" font-size="7.6" fill="#262626" color="#262626" stroke-width="0.1" text-anchor="middle" textLength="22.00" lengthAdjust="spacingAndGlyphs">EBITDA</text>
<rect x="63.8" y="412.3" width="581.9" height="1.6" fill="#e6e6e6"/>
<line x1="185.3" y1="413" x2="185.3" y2="499" stroke="#dcdcdc" stroke-width="1"/>
<line x1="185.3" y1="426.63" x2="645.7" y2="426.63" stroke="#dcdcdc" stroke-width="1"/>
<text x="189.00" y="422.60" font-size="7.4" fill="#262626" color="#262626" stroke-width="0.1" textLength="21.81" lengthAdjust="spacingAndGlyphs">Январь</text>
<text x="379.60" y="422.40" font-size="8.1" fill="#2a2a2a" color="#2a2a2a" stroke-width="0.1" text-anchor="middle" textLength="37.81" lengthAdjust="spacingAndGlyphs">16 036 381,32</text>
<text x="493.30" y="422.40" font-size="8.1" fill="#2a2a2a" color="#2a2a2a" stroke-width="0.1" text-anchor="middle" textLength="28.27" lengthAdjust="spacingAndGlyphs">-473 142,1</text>
<text x="600.30" y="422.40" font-size="8.1" fill="#2a2a2a" color="#2a2a2a" stroke-width="0.1" text-anchor="middle" textLength="29.59" lengthAdjust="spacingAndGlyphs">875 531,87</text>
<line x1="185.3" y1="440.06" x2="645.7" y2="440.06" stroke="#dcdcdc" stroke-width="1"/>
<text x="189.00" y="436.03" font-size="7.4" fill="#262626" color="#262626" stroke-width="0.1" textLength="25.87" lengthAdjust="spacingAndGlyphs">Февраль</text>
<text x="379.60" y="435.83" font-size="8.1" fill="#2a2a2a" color="#2a2a2a" stroke-width="0.1" text-anchor="middle" textLength="37.81" lengthAdjust="spacingAndGlyphs">16 323 336,67</text>
<text x="493.30" y="435.83" font-size="8.1" fill="#2a2a2a" color="#2a2a2a" stroke-width="0.1" text-anchor="middle" textLength="29.59" lengthAdjust="spacingAndGlyphs">454 276,53</text>
<text x="600.30" y="435.83" font-size="8.1" fill="#2a2a2a" color="#2a2a2a" stroke-width="0.1" text-anchor="middle" textLength="34.53" lengthAdjust="spacingAndGlyphs">1 707 919,63</text>
<line x1="185.3" y1="453.49" x2="645.7" y2="453.49" stroke="#dcdcdc" stroke-width="1"/>
<text x="189.00" y="449.46" font-size="7.4" fill="#262626" color="#262626" stroke-width="0.1" textLength="15.23" lengthAdjust="spacingAndGlyphs">Март</text>
<text x="379.60" y="449.26" font-size="8.1" fill="#2a2a2a" color="#2a2a2a" stroke-width="0.1" text-anchor="middle" textLength="37.81" lengthAdjust="spacingAndGlyphs">12 266 180,35</text>
<text x="493.30" y="449.26" font-size="8.1" fill="#2a2a2a" color="#2a2a2a" stroke-width="0.1" text-anchor="middle" textLength="34.53" lengthAdjust="spacingAndGlyphs">2 102 094,63</text>
<text x="600.30" y="449.26" font-size="8.1" fill="#2a2a2a" color="#2a2a2a" stroke-width="0.1" text-anchor="middle" textLength="34.53" lengthAdjust="spacingAndGlyphs">3 337 284,83</text>
<line x1="185.3" y1="466.92" x2="645.7" y2="466.92" stroke="#dcdcdc" stroke-width="1"/>
<text x="189.00" y="462.89" font-size="7.4" fill="#262626" color="#262626" stroke-width="0.1" textLength="21.59" lengthAdjust="spacingAndGlyphs">Апрель</text>
<text x="379.60" y="462.69" font-size="8.1" fill="#2a2a2a" color="#2a2a2a" stroke-width="0.1" text-anchor="middle" textLength="37.81" lengthAdjust="spacingAndGlyphs">12 324 238,16</text>
<text x="493.30" y="462.69" font-size="8.1" fill="#2a2a2a" color="#2a2a2a" stroke-width="0.1" text-anchor="middle" textLength="34.53" lengthAdjust="spacingAndGlyphs">1 494 733,79</text>
<text x="600.30" y="462.69" font-size="8.1" fill="#2a2a2a" color="#2a2a2a" stroke-width="0.1" text-anchor="middle" textLength="34.53" lengthAdjust="spacingAndGlyphs">2 973 637,44</text>
<line x1="185.3" y1="480.35" x2="645.7" y2="480.35" stroke="#dcdcdc" stroke-width="1"/>
<text x="189.00" y="476.32" font-size="7.4" fill="#262626" color="#262626" stroke-width="0.1" textLength="12.47" lengthAdjust="spacingAndGlyphs">Май</text>
<text x="379.60" y="476.12" font-size="8.1" fill="#2a2a2a" color="#2a2a2a" stroke-width="0.1" text-anchor="middle" textLength="37.81" lengthAdjust="spacingAndGlyphs">14 517 541,87</text>
<text x="493.30" y="476.12" font-size="8.1" fill="#2a2a2a" color="#2a2a2a" stroke-width="0.1" text-anchor="middle" textLength="34.53" lengthAdjust="spacingAndGlyphs">2 737 806,28</text>
<text x="600.30" y="476.12" font-size="8.1" fill="#2a2a2a" color="#2a2a2a" stroke-width="0.1" text-anchor="middle" textLength="34.53" lengthAdjust="spacingAndGlyphs">4 358 557,68</text>
<line x1="185.3" y1="493.78" x2="645.7" y2="493.78" stroke="#dcdcdc" stroke-width="1"/>
<text x="189.00" y="489.75" font-size="7.4" fill="#262626" color="#262626" stroke-width="0.1" textLength="16.18" lengthAdjust="spacingAndGlyphs">Июнь</text>
<text x="379.60" y="489.55" font-size="8.1" fill="#2a2a2a" color="#2a2a2a" stroke-width="0.1" text-anchor="middle" textLength="29.59" lengthAdjust="spacingAndGlyphs">14 238 384</text>
<text x="493.30" y="489.55" font-size="8.1" fill="#2a2a2a" color="#2a2a2a" stroke-width="0.1" text-anchor="middle" textLength="28.27" lengthAdjust="spacingAndGlyphs">-833 330,6</text>
<text x="600.30" y="489.55" font-size="8.1" fill="#2a2a2a" color="#2a2a2a" stroke-width="0.1" text-anchor="middle" textLength="29.59" lengthAdjust="spacingAndGlyphs">732 816,12</text>
<rect x="67.6" y="416.3" width="6.9" height="6.9" fill="#fff" stroke="#a5a5a5" stroke-width="0.8"/>
<line x1="69.3" y1="419.75" x2="72.8" y2="419.75" stroke="#777" stroke-width="0.8"/>
<text x="77.70" y="423.80" font-size="7.4" fill="#262626" color="#262626" stroke-width="0.1" textLength="14.00" lengthAdjust="spacingAndGlyphs">2020</text>
<circle cx="641.2" cy="490" r="15.1" fill="#ff6c0a"/>
<path d="M637.6 490.6H645.6M641.6 486.6V494.6" stroke="#fff" stroke-width="1.3"/>
<rect x="0" y="495.6" width="660" height="3.4" fill="#acacac"/>
<rect x="657.6" y="8" width="2.4" height="491" fill="#acacac"/>
</svg></body></html>
